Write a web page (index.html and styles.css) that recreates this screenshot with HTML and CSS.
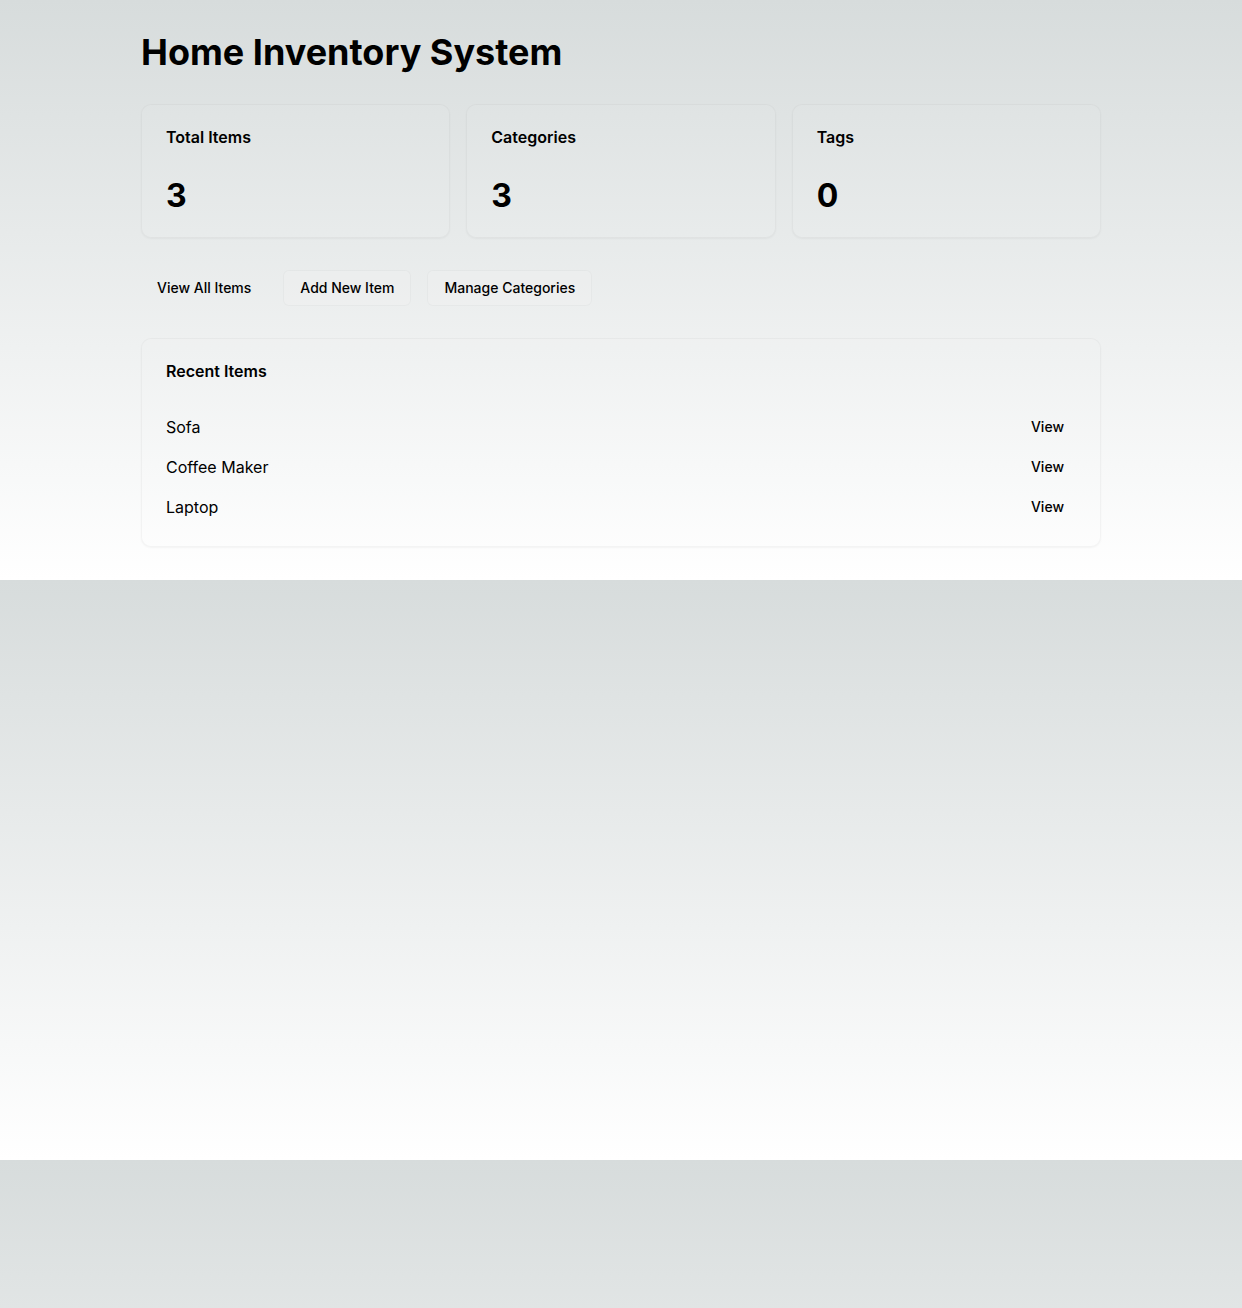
FILE: index.html
```html
<!DOCTYPE html>
<html lang="en">
<head>
<meta charset="utf-8">
<title>Home Inventory System</title>
<link rel="stylesheet" href="styles.css">
</head>
<body>
<div class="container">
  <h1 class="page-title">Home Inventory System</h1>
  <div class="stats">
    <div class="card stat">
      <h3 class="stat-label">Total Items</h3>
      <p class="stat-value">3</p>
    </div>
    <div class="card stat">
      <h3 class="stat-label">Categories</h3>
      <p class="stat-value">3</p>
    </div>
    <div class="card stat">
      <h3 class="stat-label">Tags</h3>
      <p class="stat-value">0</p>
    </div>
  </div>
  <div class="actions">
    <button class="btn btn-ghost">View All Items</button>
    <button class="btn">Add New Item</button>
    <button class="btn">Manage Categories</button>
  </div>
  <div class="card recent">
    <h3 class="recent-title">Recent Items</h3>
    <ul class="recent-list">
      <li class="recent-row"><span class="item-name">Sofa</span><button class="btn-view">View</button></li>
      <li class="recent-row"><span class="item-name">Coffee Maker</span><button class="btn-view">View</button></li>
      <li class="recent-row"><span class="item-name">Laptop</span><button class="btn-view">View</button></li>
    </ul>
  </div>
</div>
</body>
</html>
```

FILE: styles.css
```css
html, body {
  margin: 0;
  padding: 0;
}

body {
  font-family: Inter, "Noto Sans", sans-serif;
  color: #000;
  background: linear-gradient(to bottom, #d7dcdc 0%, #ffffff 100%);
}

.container {
  max-width: 960px;
  margin: 0 auto;
  padding: 31px 0 33px;
}

.page-title {
  margin: 0 0 30px;
  font-size: 36px;
  line-height: 43px;
  font-weight: 700;
}

.stats {
  display: grid;
  grid-template-columns: repeat(3, 1fr);
  gap: 16px;
}

.card {
  border: 1px solid rgba(0, 0, 0, 0.035);
  border-radius: 10px;
  background: rgba(255, 255, 255, 0.06);
  box-shadow: 0 1px 2px rgba(0, 0, 0, 0.04);
}

.stat {
  padding: 20px 24px;
}

.stat-label {
  margin: 0 0 26px;
  font-size: 16px;
  line-height: 24px;
  font-weight: 600;
}

.stat-value {
  margin: 0;
  font-size: 32px;
  line-height: 42px;
  font-weight: 700;
}

.actions {
  display: flex;
  gap: 16px;
  margin: 32px 0 32px;
}

.btn {
  font-family: inherit;
  font-size: 14px;
  line-height: 20px;
  font-weight: 500;
  color: #000;
  padding: 7px 16px;
  border: 1px solid rgba(0, 0, 0, 0.03);
  border-radius: 6px;
  background: rgba(255, 255, 255, 0.1);
  cursor: pointer;
}

.btn-ghost {
  border: none;
  padding: 8px 16px;
  background: transparent;
}

.recent {
  padding: 20px 24px 19px;
}

.recent-title {
  margin: 0;
  font-size: 16px;
  line-height: 24px;
  font-weight: 600;
}

.recent-list {
  list-style: none;
  margin: 24px 0 0;
  padding: 0;
}

.recent-row {
  display: flex;
  justify-content: space-between;
  align-items: center;
  height: 40px;
}

.item-name {
  font-size: 16px;
  line-height: 24px;
}

.btn-view {
  font-family: inherit;
  font-size: 14px;
  line-height: 20px;
  font-weight: 500;
  color: #000;
  padding: 8px 12px;
  border: none;
  background: transparent;
  border-radius: 6px;
}
```
